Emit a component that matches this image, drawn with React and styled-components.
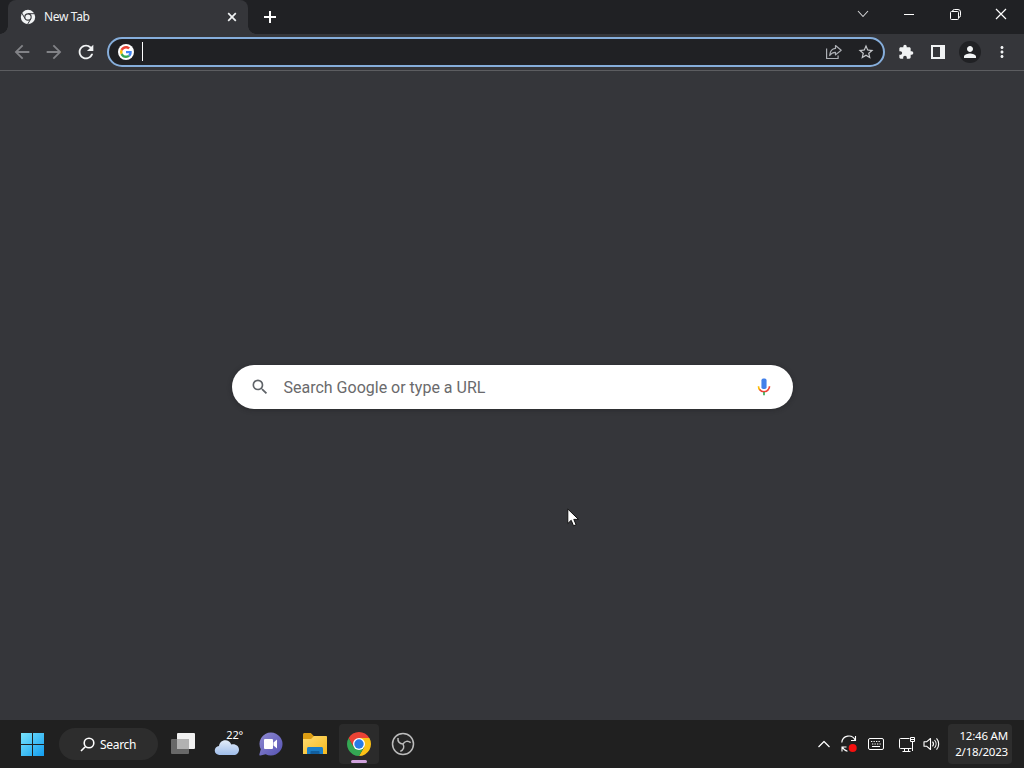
import React from "react";
import styled, { createGlobalStyle } from "styled-components";

const GlobalStyle = createGlobalStyle`
  * {
    box-sizing: border-box;
  }

  body {
    margin: 0;
    overflow: hidden;
    background: #35363a;
    font-family: "Noto Sans", "Open Sans", sans-serif;
  }

  svg {
    display: block;
    flex-shrink: 0;
  }
`;

const Desktop = styled.div`
  position: relative;
  display: flex;
  flex-direction: column;
  width: 1024px;
  height: 768px;
  overflow: hidden;
`;

const TabStrip = styled.header`
  display: flex;
  height: 34px;
  padding-left: 8px;
  background: #202124;
`;

const Tab = styled.div`
  position: relative;
  display: flex;
  align-items: center;
  width: 240px;
  height: 34px;
  padding: 0 9px 0 12px;
  border-radius: 8px 8px 0 0;
  background: #35363a;
  color: #f1f3f4;

  &::before,
  &::after {
    content: "";
    position: absolute;
    bottom: 0;
    width: 8px;
    height: 8px;
  }

  &::before {
    left: -8px;
    background: radial-gradient(circle at 0 0, transparent 7.5px, #35363a 8px);
  }

  &::after {
    right: -8px;
    background: radial-gradient(circle at 100% 0, transparent 7.5px, #35363a 8px);
  }
`;

const TabTitle = styled.span`
  flex: 1;
  margin-left: 8px;
  font-size: 12px;
  line-height: 16px;
  letter-spacing: -0.35px;
`;

const NewTabButton = styled.div`
  display: grid;
  place-items: center;
  width: 28px;
  margin-left: 8px;
`;

const WindowControls = styled.div`
  display: flex;
  height: 28px;
  margin-left: auto;
`;

const WindowButton = styled.div`
  display: grid;
  place-items: center;
  width: 46px;
`;

const Toolbar = styled.div`
  display: flex;
  align-items: center;
  height: 37px;
  padding: 0 6px;
  border-bottom: 1px solid #5c5d60;
  background: #35363a;
`;

const ToolButton = styled.div`
  display: grid;
  place-items: center;
  width: 32px;
  height: 32px;
  color: ${(props) => props.$color || "#f1f3f4"};
`;

const Omnibox = styled.div`
  display: flex;
  flex: 1;
  align-items: center;
  height: 30px;
  margin: 0 5px;
  padding: 0 1px 0 9px;
  border: 2px solid #86aedb;
  border-radius: 15px;
  background: #202124;
`;

const Caret = styled.span`
  width: 1px;
  height: 19px;
  margin: -2px auto 0 8px;
  background: #fff;
`;

const Avatar = styled.div`
  display: grid;
  place-items: center;
  width: 22px;
  height: 22px;
  border-radius: 50%;
  background: #202124;
`;

const Page = styled.main`
  display: flex;
  flex: 1;
  justify-content: center;
  align-items: flex-start;
  padding: 294px 0 0 1px;
  background: #35363a;
`;

const SearchBox = styled.div`
  display: flex;
  align-items: center;
  width: 561px;
  height: 44px;
  padding: 0 18px 0 18px;
  border-radius: 22px;
  background: #fff;
  color: #5f6368;
  box-shadow: 0 1px 5px rgba(20, 20, 24, 0.35);
`;

const Placeholder = styled.span`
  flex: 1;
  margin: 1px 0 0 13.5px;
  color: #6a6a6c;
  font-family: Roboto, sans-serif;
  font-size: 16px;
`;

const Taskbar = styled.footer`
  display: flex;
  align-items: center;
  height: 48px;
  padding: 0 12px 0 10px;
  background: #202020;
  color: #fff;
`;

const TaskButton = styled.div`
  position: relative;
  display: grid;
  place-items: center;
  width: 40px;
  height: 40px;
  margin: 0 2px;
  border-radius: 4px;
  background: ${(props) => (props.$active ? "#2b2b2b" : "transparent")};

  &::after {
    content: "";
    display: ${(props) => (props.$active ? "block" : "none")};
    position: absolute;
    bottom: 1px;
    left: 12px;
    width: 16px;
    height: 3px;
    border-radius: 2px;
    background: #cfa2dc;
  }
`;

const SearchPill = styled.div`
  display: flex;
  align-items: center;
  width: 99px;
  height: 32px;
  margin: 0 3px 0 5px;
  padding-left: 21px;
  border-radius: 16px;
  background: #2d2d2d;
  font-size: 12px;
  letter-spacing: -0.3px;

  svg {
    margin-right: 5px;
  }
`;

const Label = styled.span`
  padding-top: 1px;
`;

const Temperature = styled.span`
  position: absolute;
  top: 3px;
  right: 4px;
  font-size: 11px;
  line-height: 16px;
  letter-spacing: -0.2px;
`;

const Tray = styled.div`
  display: flex;
  align-items: center;
  gap: 10px;
  margin-left: auto;
`;

const TrayPair = styled.div`
  display: flex;
  gap: 7px;
  margin: 0 8px 0 5px;
`;

const Clock = styled.div`
  display: flex;
  flex-direction: column;
  justify-content: center;
  width: 64px;
  height: 40px;
  padding-right: 4px;
  border-radius: 4px;
  background: #2d2d2d;
  font-size: 11.5px;
  line-height: 16px;
  letter-spacing: -0.2px;
  text-align: right;
  white-space: nowrap;
`;

const Pointer = styled.div`
  position: absolute;
  top: 508px;
  left: 567px;
`;

const ChromeMono = () => (
  <svg width="16" height="16" viewBox="0 0 16 16">
    <circle cx="8" cy="8" r="7.2" fill="#f1f3f4" />
    <circle cx="8" cy="8" r="3.7" fill="#35363a" />
    <path d="M8 4.7h7M5.1 9.7 1.6 3.7M10.9 9.7 7.4 15.6" stroke="#35363a" strokeWidth="1" />
    <circle cx="8" cy="8" r="2.6" fill="#f1f3f4" />
  </svg>
);

const ChromeLogo = () => (
  <svg width="24" height="24" viewBox="0 0 24 24">
    <path d="M12 6h10.39A12 12 0 0 1 12 24l5.2-9z" fill="#fbc116" />
    <path d="M6.8 15 1.61 6A12 12 0 0 0 12 24l5.2-9z" fill="#34a853" />
    <path d="M6.8 15 1.61 6A12 12 0 0 1 22.39 6H12z" fill="#ea4335" />
    <circle cx="12" cy="12" r="6" fill="#fff" />
    <circle cx="12" cy="12" r="4.7" fill="#287be6" />
  </svg>
);

const GoogleBadge = () => (
  <svg width="16" height="16" viewBox="0 0 48 48">
    <circle cx="24" cy="24" r="24" fill="#fff" />
    <g transform="translate(6 6) scale(.75)">
      <path d="M46.98 24.55c0-1.57-.15-3.09-.38-4.55H24v9.02h12.94c-.58 2.96-2.26 5.48-4.78 7.18l7.73 6c4.51-4.18 7.09-10.36 7.09-17.65z" fill="#4285f4" />
      <path d="M10.53 28.59a14.5 14.5 0 0 1 0-9.18l-7.98-6.19a24 24 0 0 0 0 21.56z" fill="#fbbc05" />
      <path d="M24 9.5c3.54 0 6.71 1.22 9.21 3.6l6.85-6.85C35.9 2.38 30.47 0 24 0 14.62 0 6.51 5.38 2.56 13.22l7.98 6.19C12.43 13.72 17.74 9.5 24 9.5z" fill="#ea4335" />
      <path d="M24 48c6.48 0 11.93-2.13 15.89-5.81l-7.73-6c-2.15 1.45-4.92 2.3-8.16 2.3-6.26 0-11.57-4.22-13.47-9.91l-7.98 6.19C6.51 42.62 14.62 48 24 48z" fill="#34a853" />
    </g>
  </svg>
);

// single colour 24-unit glyphs
const Glyph = ({ size = 18, d }) => (
  <svg width={size} height={size} viewBox="0 0 24 24" fill="currentColor">
    <path d={d} />
  </svg>
);

const glyphs = {
  back: "M20 11H7.83l5.59-5.59L12 4l-8 8 8 8 1.41-1.41L7.83 13H20v-2z",
  forward: "M12 4l-1.41 1.41L16.17 11H4v2h12.17l-5.58 5.59L12 20l8-8z",
  reload:
    "M17.65 6.35A7.958 7.958 0 0 0 12 4c-4.42 0-7.99 3.58-7.99 8s3.57 8 7.99 8c3.73 0 6.84-2.55 7.73-6h-2.08A5.99 5.99 0 0 1 12 18c-3.31 0-6-2.69-6-6s2.69-6 6-6c1.66 0 3.14.69 4.22 1.78L13 11h7V4l-2.35 2.35z",
  star: "M22 9.24l-7.19-.62L12 2 9.19 8.63 2 9.24l5.46 4.73L5.82 21 12 17.27 18.18 21l-1.63-7.03L22 9.24zM12 15.4l-3.76 2.27 1-4.28-3.32-2.88 4.38-.38L12 6.1l1.71 4.04 4.38.38-3.32 2.88 1 4.28L12 15.4z",
  puzzle:
    "M20.5 11H19V7c0-1.1-.9-2-2-2h-4V3.5a2.5 2.5 0 0 0-5 0V5H4c-1.1 0-1.99.9-1.99 2v3.8H3.5c1.49 0 2.7 1.21 2.7 2.7s-1.21 2.7-2.7 2.7H2V20c0 1.1.9 2 2 2h3.8v-1.5c0-1.49 1.21-2.7 2.7-2.7s2.7 1.21 2.7 2.7V22H17c1.1 0 2-.9 2-2v-4h1.5a2.5 2.5 0 0 0 0-5z",
  person:
    "M12 12c2.21 0 4-1.79 4-4s-1.79-4-4-4-4 1.79-4 4 1.79 4 4 4zm0 2c-2.67 0-8 1.34-8 4v2h16v-2c0-2.66-5.33-4-8-4z",
  more: "M12 8c1.1 0 2-.9 2-2s-.9-2-2-2-2 .9-2 2 .9 2 2 2zm0 2c-1.1 0-2 .9-2 2s.9 2 2 2 2-.9 2-2-.9-2-2-2zm0 6c-1.1 0-2 .9-2 2s.9 2 2 2 2-.9 2-2-.9-2-2-2z",
  search:
    "M15.5 14h-.79l-.28-.27A6.471 6.471 0 0 0 16 9.5 6.5 6.5 0 1 0 9.5 16c1.61 0 3.09-.59 4.23-1.57l.27.28v.79l5 4.99L20.49 19l-4.99-5zm-6 0C7.01 14 5 11.99 5 9.5S7.01 5 9.5 5 14 7.01 14 9.5 11.99 14 9.5 14z",
};

const Line = ({ w, h, d, color = "#fff", width = 1 }) => (
  <svg width={w} height={h} viewBox={`0 0 ${w} ${h}`} fill="none" stroke={color} strokeWidth={width} strokeLinejoin="round">
    <path d={d} />
  </svg>
);

const SidePanelIcon = () => (
  <svg width="14" height="14" viewBox="0 0 14 14">
    <path d="M0 0h14v14H0zM2 2v10h7V2z" fill="currentColor" fillRule="evenodd" />
  </svg>
);

const MicIcon = () => (
  <svg width="22" height="22" viewBox="0 0 24 24">
    <rect x="9.2" y="2.8" width="5.6" height="11.5" rx="2" fill="#4280ea" />
    <path d="M6 11.2a6 6 0 0 0 1.5 4" fill="none" stroke="#fbbc04" strokeWidth="1.8" />
    <path d="M7.2 14.8C9.5 18 14.5 18 16.8 14.8" fill="none" stroke="#ea4335" strokeWidth="1.8" />
    <path d="M16.6 15A6 6 0 0 0 18 11.2" fill="none" stroke="#ea4335" strokeWidth="1.8" />
    <path d="M12 17.5V21" stroke="#34a853" strokeWidth="1.8" />
  </svg>
);

const WindowsLogo = () => (
  <svg width="24" height="24" viewBox="0 0 24 24">
    <defs>
      <linearGradient id="win" x1="0" y1="0" x2="1" y2="1">
        <stop offset="0" stopColor="#78e3fb" />
        <stop offset="1" stopColor="#129df0" />
      </linearGradient>
    </defs>
    <path d="M1 1h11v11H1zM13 1h11v11H13zM1 13h11v11H1zM13 13h11v11H13z" fill="url(#win)" />
  </svg>
);

const TaskViewIcon = () => (
  <svg width="26" height="24" viewBox="0 0 26 24">
    <rect x="7" y="1" width="18" height="16" rx="1" fill="#f1f1f1" />
    <rect x="1" y="7" width="18" height="15" rx="1" fill="#686868" />
    <path d="M7 7h12v10H7z" fill="#b2b2b2" />
  </svg>
);

const WeatherIcon = () => (
  <svg width="26" height="26" viewBox="0 0 26 26">
    <defs>
      <linearGradient id="cloud" x1="0" y1="0" x2="0" y2="1">
        <stop offset="0" stopColor="#e4edf9" />
        <stop offset="1" stopColor="#9fbdea" />
      </linearGradient>
    </defs>
    <path d="M5.5 24a4.500 4.500 0 0 1-.5-9C5.500 11 8.500 8.800 12 9.200c2.800.3 4.600 2 5.200 4.300C21.500 12.500 25 15 25 18.700c0 3-2.300 5.300-5.300 5.300z" fill="url(#cloud)" />
  </svg>
);

const ChatIcon = () => (
  <svg width="24" height="24" viewBox="0 0 24 24">
    <defs>
      <linearGradient id="chat" x1="0" y1="0" x2="1" y2="1">
        <stop offset="0" stopColor="#8f8ad2" />
        <stop offset="1" stopColor="#5552b3" />
      </linearGradient>
    </defs>
    <path d="M12 .5a11.500 11.500 0 1 1-5.300 21.700L1.500 23.500c-.8.200-1.300-.4-1.100-1.200l1.400-5A11.500 11.500 0 0 1 12 .5z" fill="url(#chat)" />
    <rect x="5" y="7" width="9" height="10" rx="1" fill="#fff" />
    <path d="M14.500 10.500 18 7.500v9l-3.500-3z" fill="#fff" />
  </svg>
);

const FolderIcon = () => (
  <svg width="26" height="24" viewBox="0 0 26 24">
    <defs>
      <linearGradient id="folder" x1="0" y1="0" x2="1" y2="1">
        <stop offset="0" stopColor="#ffdc71" />
        <stop offset="1" stopColor="#f5b91e" />
      </linearGradient>
    </defs>
    <path d="M1 2.500C1 1.700 1.600 1 2.500 1h6.300l3 3H24v8H1z" fill="#dc9d13" />
    <path d="M1 7h8l3-3h12c.6 0 1 .4 1 1v17H1z" fill="url(#folder)" />
    <path d="M5 22v-5.500c0-.8.700-1.500 1.500-1.500h13c.8 0 1.500.7 1.500 1.500V22z" fill="#1b7fc9" />
    <path d="M8.500 22v-2c0-.6.400-1 1-1h7c.6 0 1 .4 1 1v2z" fill="#125f9f" />
  </svg>
);

const blade = "M12 12C8.500 12 6.500 9.500 7 6";

const ObsIcon = () => (
  <svg width="24" height="24" viewBox="0 0 24 24" fill="none" stroke="#bdbdbd" strokeWidth="1.500">
    <circle cx="12" cy="12" r="10.500" fill="#262626" />
    {[0, 120, 240].map((angle) => (
      <path key={angle} d={blade} transform={`rotate(${angle} 12 12)`} />
    ))}
  </svg>
);

const SyncIcon = () => (
  <svg width="18" height="18" viewBox="0 0 18 18" fill="none" stroke="#fff" strokeWidth="1.100">
    <path d="M1.800 7.500A7 7 0 0 1 15.200 5.200M15.500 1v4.500H11M7.500 16.200A7 7 0 0 1 2.500 12.200M2 16.500V12h4.500" />
    <circle cx="12.700" cy="13" r="4" fill="#f5100f" stroke="none" />
  </svg>
);

const KeyboardIcon = () => (
  <svg width="16" height="12" viewBox="0 0 16 12" fill="none" stroke="#fff">
    <rect x=".5" y=".5" width="15" height="11" rx="1.500" />
    <path d="M3 3.500h10M4 6h9" strokeDasharray="1.300 1.200" />
    <path d="M4 8.500h8" />
  </svg>
);

const NetworkIcon = () => (
  <svg width="17" height="17" viewBox="0 0 17 17" fill="none" stroke="#fff">
    <path d="M10.500 2.500h-9q-1 0-1 1v8q0 1 1 1h11M5.500 12.500v3M9.500 12.500v3M3.500 15.500h8" />
    <path d="M11.500 1.500h4v4h-4zM13.500 5.500v9.500M11.500 3.500h4" />
  </svg>
);

const SpeakerIcon = () => (
  <svg width="17" height="16" viewBox="0 0 17 16" fill="none" stroke="#fff" strokeWidth="1.100" strokeLinejoin="round">
    <path d="M1 5.800h2.500L7.500 2.500v11l-4-3.300H1zM9.500 5.700a3.500 3.500 0 0 1 0 4.600M11.500 4a6 6 0 0 1 0 8M13.500 2.300a8.500 8.500 0 0 1 0 11.400" />
  </svg>
);

const BrowserTabs = () => (
  <TabStrip>
    <Tab>
      <ChromeMono />
      <TabTitle>New Tab</TabTitle>
      <Line w={14} h={14} d="M3.200 3.200l7.600 7.600M10.800 3.200l-7.600 7.600" width={1.700} color="#f1f3f4" />
    </Tab>
    <NewTabButton>
      <Line w={14} h={14} d="M7 1v12M1 7h12" width={2} />
    </NewTabButton>
    <WindowControls>
      <WindowButton>
        <Line w={12} h={8} d="M1 1l5 5.500L11 1" color="#d5d6d8" width={1.100} />
      </WindowButton>
      <WindowButton>
        <Line w={10} h={1} d="M0 .5h10" />
      </WindowButton>
      <WindowButton>
        <Line w={11} h={11} d="M1.500 2.500h6q1 0 1 1v6q0 1-1 1h-6q-1 0-1-1v-6q0-1 1-1zM2.500 2.500q0-2 2-2H8q2.500 0 2.500 2.500v3.500q0 2-2 2" />
      </WindowButton>
      <WindowButton>
        <Line w={12} h={12} d="M1 1l10 10M11 1L1 11" width={1.200} />
      </WindowButton>
    </WindowControls>
  </TabStrip>
);

const BrowserToolbar = () => (
  <Toolbar>
    <ToolButton $color="#828387">
      <Glyph size={22} d={glyphs.back} />
    </ToolButton>
    <ToolButton $color="#828387">
      <Glyph size={22} d={glyphs.forward} />
    </ToolButton>
    <ToolButton>
      <Glyph size={22} d={glyphs.reload} />
    </ToolButton>
    <Omnibox>
      <GoogleBadge />
      <Caret />
      <ToolButton $color="#aeb1b6">
        <Line
          w={18}
          h={16}
          color="currentColor"
          width={1.200}
          d="M1.600 4.500v10h11.500v-3M10.500 1.500l5.700 4.700-5.700 4.700V8.300C7.500 8.200 6 9.300 4.700 11.500 5 7.300 7.200 4.700 10.500 4.400z"
        />
      </ToolButton>
      <ToolButton $color="#c6c8cb">
        <Glyph d={glyphs.star} />
      </ToolButton>
    </Omnibox>
    <ToolButton>
      <Glyph size={16} d={glyphs.puzzle} />
    </ToolButton>
    <ToolButton>
      <SidePanelIcon />
    </ToolButton>
    <ToolButton>
      <Avatar>
        <Glyph d={glyphs.person} />
      </Avatar>
    </ToolButton>
    <ToolButton>
      <Glyph d={glyphs.more} />
    </ToolButton>
  </Toolbar>
);

const App = () => (
  <>
    <GlobalStyle />
    <Desktop>
      <BrowserTabs />
      <BrowserToolbar />
      <Page>
        <SearchBox>
          <Glyph size={20} d={glyphs.search} />
          <Placeholder>Search Google or type a URL</Placeholder>
          <MicIcon />
        </SearchBox>
      </Page>
      <Taskbar>
        <TaskButton>
          <WindowsLogo />
        </TaskButton>
        <SearchPill>
          <Line w={15} h={15} d="M5.500 9.500L1 14M4.200 6a4.800 4.800 0 1 0 9.600 0 4.800 4.800 0 1 0-9.600 0" width={1.600} />
          <Label>Search</Label>
        </SearchPill>
        <TaskButton>
          <TaskViewIcon />
        </TaskButton>
        <TaskButton>
          <WeatherIcon />
          <Temperature>22°</Temperature>
        </TaskButton>
        <TaskButton>
          <ChatIcon />
        </TaskButton>
        <TaskButton>
          <FolderIcon />
        </TaskButton>
        <TaskButton $active>
          <ChromeLogo />
        </TaskButton>
        <TaskButton>
          <ObsIcon />
        </TaskButton>
        <Tray>
          <Line w={12} h={8} d="M.5 7L6 1.500 11.500 7" width={1.200} />
          <SyncIcon />
          <KeyboardIcon />
          <TrayPair>
            <NetworkIcon />
            <SpeakerIcon />
          </TrayPair>
        </Tray>
        <Clock>
          <span>12:46 AM</span>
          <span>2/18/2023</span>
        </Clock>
      </Taskbar>
      <Pointer>
        <svg width="13" height="20" viewBox="0 0 13 20">
          <path d="M.8 1v14.500l3.400-3.200 2.300 5.500 2.600-1.100-2.300-5.300h4.700z" fill="#fff" stroke="#111" strokeWidth="1" />
        </svg>
      </Pointer>
    </Desktop>
  </>
);

export default App;
